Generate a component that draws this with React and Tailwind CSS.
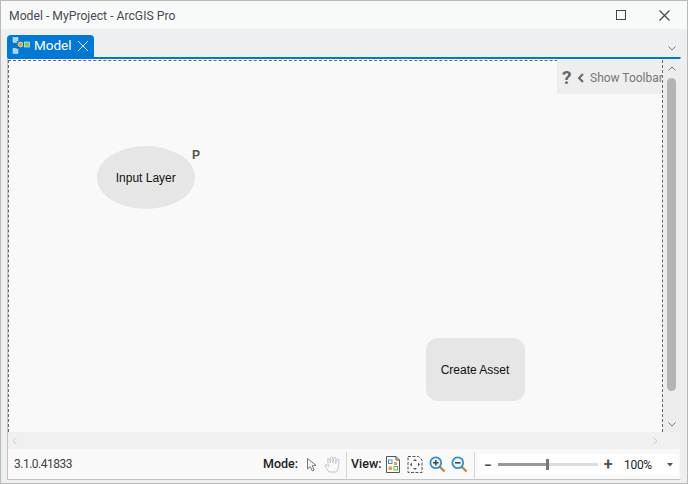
import React from "react";

const font = { fontFamily: 'Roboto,"Open Sans",sans-serif' };

function ModelIcon() {
  return (
    <svg width="18" height="18" viewBox="0 0 18 18" className="shrink-0">
      <rect x="1" y="0.5" width="5" height="5" fill="#a9d3f5" stroke="#d6ebfb" strokeWidth="0.5" />
      <rect x="1" y="11.5" width="5" height="5" fill="#a9d3f5" stroke="#d6ebfb" strokeWidth="0.5" />
      <path d="M5 4 L7 7 M5 12 L7 9" stroke="#12406e" strokeWidth="1" />
      <circle cx="8.5" cy="7.5" r="2.4" fill="#e8a33d" stroke="#fbe3b5" strokeWidth="0.7" />
      <path d="M11 7.5h1.5" stroke="#12406e" strokeWidth="1" />
      <rect x="12.5" y="5" width="5" height="5" fill="#7cc576" stroke="#d7f0d3" strokeWidth="0.7" />
    </svg>
  );
}

function Chevron({ d, color = "#7a7a7a", w = 1 }) {
  return (
    <svg width="10" height="10" viewBox="0 0 10 10" fill="none" stroke={color} strokeWidth={w}>
      <path d={d} />
    </svg>
  );
}

function ModeIcons() {
  return (
    <>
      <svg width="12" height="16" viewBox="0 0 12 16" fill="none" stroke="#777" strokeWidth="1">
        <path d="M1.5 1.5 L1.5 12 L4.2 9.6 L6.4 14 L8.2 13 L6.2 8.8 L10 8.4 Z" fill="#f4f4f4" />
      </svg>
      <svg width="18" height="17" viewBox="0 0 18 17" fill="none" stroke="#c8c8c8" strokeWidth="1">
        <path d="M5 16 L1 10 Q0.5 8.5 2 8.5 L4.5 10.5 L3.5 3 Q3.8 2 5 3 L6.5 7 L6.5 1.5 Q7.5 0.5 8.5 1.5 L9 7 L10 1.5 Q11 1 12 2 L11.5 7.5 L13.5 3 Q14.5 2.5 15 3.5 L14.5 10 Q14 14 12.5 16 Z" />
      </svg>
    </>
  );
}

function ViewIcons() {
  return (
    <>
      <svg width="16" height="17" viewBox="0 0 16 17" fill="none">
        <path d="M1.5 0.5 H11 L14.5 4 V16.5 H1.5 Z" stroke="#555" fill="#fff" />
        <path d="M11 0.5 V4 H14.5" stroke="#555" />
        <rect x="3.5" y="4" width="3.5" height="3.5" stroke="#3d93d8" />
        <rect x="3.5" y="10.5" width="3.5" height="3.5" fill="#e8a33d" />
        <rect x="9" y="10.5" width="3.5" height="3.5" stroke="#5fb35a" />
        <rect x="9" y="6" width="3" height="3" fill="#e8a33d" />
      </svg>
      <svg width="16" height="17" viewBox="0 0 16 17" fill="none">
        <path d="M1 0.5 H11.5 L15 4 V16.5 H1 Z" stroke="#555" fill="#fafafa" strokeDasharray="3 1.5" />
        <path d="M8 3 l-2 2 h4 Z M8 14 l-2 -2 h4 Z M3 8.5 l2 -2 v4 Z M13 8.5 l-2 -2 v4 Z" fill="#555" />
      </svg>
      <svg width="17" height="17" viewBox="0 0 17 17" fill="none">
        <path d="M10.5 10.5 L15.5 15.5" stroke="#c08a3e" strokeWidth="2.4" />
        <circle cx="6.8" cy="6.8" r="5.4" stroke="#2f8fd0" strokeWidth="1.8" fill="#f2f8fd" />
        <path d="M4 6.8 H9.6 M6.8 4 V9.6" stroke="#444" strokeWidth="1.6" />
      </svg>
      <svg width="17" height="17" viewBox="0 0 17 17" fill="none" className="-ml-px">
        <path d="M10.5 10.5 L15.5 15.5" stroke="#c08a3e" strokeWidth="2.4" />
        <circle cx="6.8" cy="6.8" r="5.4" stroke="#2f8fd0" strokeWidth="1.8" fill="#f2f8fd" />
        <path d="M4 6.8 H9.6" stroke="#444" strokeWidth="1.6" />
      </svg>
    </>
  );
}

export default function App() {
  return (
    <div style={font} className="w-[688px] h-[484px] flex flex-col bg-[#eeeff1] border border-[#b9b9b9] overflow-hidden text-[#3c3c3c]">
      {/* Title bar */}
      <div className="h-[28px] shrink-0 bg-[#f8f9f9] flex items-center pl-[8px]">
        <span className="text-[12.2px] text-[#4a4a55] leading-none mt-[2px]">Model - MyProject - ArcGIS Pro</span>
        <div className="ml-auto flex items-center">
          <div className="w-[10px] h-[10px] border-[1.5px] border-[#444] mr-[33px]" />
          <svg width="11" height="11" viewBox="0 0 11 11" stroke="#444" strokeWidth="1.2" className="mr-[17px]">
            <path d="M0.5 0.5 L10.5 10.5 M10.5 0.5 L0.5 10.5" />
          </svg>
        </div>
      </div>

      {/* Tab strip */}
      <div className="h-[28px] shrink-0 flex items-end pl-[6px] pr-[10px] justify-between">
        <div className="w-[87px] h-[22px] bg-[#0078d4] rounded-t-[4px] flex items-center pl-[5px] text-white">
          <ModelIcon />
          <span className="text-[13.5px] ml-[4px] leading-none w-[35px]">Model</span>
          <svg width="12" height="12" viewBox="0 0 12 12" stroke="#dcebf8" strokeWidth="1" className="ml-[8px] shrink-0">
            <path d="M1 1 L11 11 M11 1 L1 11" />
          </svg>
        </div>
        <div className="mb-[4px]"><Chevron d="M1.5 3.5 L5 7 L8.5 3.5" /></div>
      </div>

      {/* Document pane */}
      <div className="flex-1 min-h-0 flex flex-col ml-[6px] mr-[6px] mb-[3px] border-t-2 border-t-[#0078d4] border-l border-r border-b border-l-[#c4c4c4] border-r-[#eeeff1] border-b-[#c4c4c4] bg-[#f9f9f9]">
        <div className="flex-1 min-h-0 flex">
          {/* Canvas */}
          <div className="relative flex-1 border-t border-l border-r border-dashed border-[#666] mt-px">
            <div className="absolute left-[87.5px] top-[85px] w-[98.5px] h-[63px] rounded-[50%] bg-[#e6e6e6] flex items-center justify-center text-[12px] text-[#111]" style={{ fontFamily: '"Liberation Sans",sans-serif' }}>
              Input Layer
            </div>
            <span className="absolute left-[183px] top-[88px] text-[12px] font-bold text-[#555] leading-none" style={{ fontFamily: '"Liberation Sans",sans-serif' }}>P</span>
            <div className="absolute left-[416.5px] top-[277px] w-[99px] h-[63px] rounded-[12px] bg-[#e6e6e6] flex items-center justify-center text-[12px] text-[#111]" style={{ fontFamily: '"Liberation Sans",sans-serif' }}>
              Create Asset
            </div>
            <div className="absolute right-[0px] top-[-1px] w-[105px] h-[34px] bg-[#eeeeee] flex items-center pl-[5px] text-[#777]">
              <span className="text-[19px] font-bold leading-none text-[#666] w-[9px] mt-[1px] shrink-0">?</span>
              <svg width="8" height="10" viewBox="0 0 8 10" fill="none" stroke="#666" strokeWidth="2" className="ml-[6px] mt-[2px] shrink-0">
                <path d="M6 1 L2 5 L6 9" />
              </svg>
              <span className="text-[12px] ml-[5px] whitespace-nowrap leading-none mt-[2px] shrink-0">Show Toolbar</span>
            </div>
          </div>
          {/* Vertical scrollbar */}
          <div className="w-[17px] bg-[#ededed] flex flex-col items-center">
            <div className="h-[19px] flex items-center justify-center"><Chevron d="M1.5 6.5 L5 3 L8.5 6.5" /></div>
            <div className="w-[9px] h-[313px] rounded-[5px] bg-[#b4b4b4]" />
            <div className="mt-auto h-[17px] flex items-center justify-center"><Chevron d="M1.5 3.5 L5 7 L8.5 3.5" /></div>
          </div>
        </div>
        {/* Horizontal scrollbar */}
        <div className="h-[17px] shrink-0 bg-[#f0f0f0] flex items-center justify-between pl-[2px] pr-[20px]">
          <Chevron d="M6.5 1.5 L3 5 L6.5 8.5" color="#d0d0d0" />
          <Chevron d="M3.5 1.5 L7 5 L3.5 8.5" color="#d0d0d0" />
        </div>
        {/* Status bar */}
        <div className="h-[30px] shrink-0 bg-[#f9f9f9] flex items-center pl-[6px] text-[12px]">
          <span className="text-[#444] text-[12px] tracking-[-0.5px] leading-none mb-px">3.1.0.41833</span>
          <div className="ml-auto flex items-center h-[26px] mt-px">
            <span className="font-medium text-[#222] text-[12.5px] w-[35px] mr-[8px] leading-none whitespace-nowrap">Mode:</span>
            <div className="flex items-center gap-[6px] pr-[4px] mr-[4px] border-r border-[#d4d4d4] h-full">
              <ModeIcons />
            </div>
            <span className="font-medium text-[#222] text-[12.5px] w-[30px] mr-[4px] leading-none whitespace-nowrap">View:</span>
            <div className="flex items-center gap-[6px] pr-[6px] mr-[3px] border-r border-[#d4d4d4] h-full">
              <ViewIcons />
            </div>
            <div className="flex items-center bg-white h-[21px] w-[200px] mr-[2px]">
              <span className="w-[20px] text-center font-bold text-[#555] text-[14px] leading-none">−</span>
              <div className="relative w-[100px] h-[3px] bg-[#dcdcdc]">
                <div className="h-full w-[50px] bg-[#999]" />
                <div className="absolute left-[48px] top-[-4px] w-[3px] h-[11px] bg-[#777]" />
              </div>
              <span className="w-[20px] text-center font-bold text-[#555] text-[16px] leading-none">+</span>
              <span className="ml-[6px] text-[12px] tracking-[-0.3px] text-[#222] leading-none">100%</span>
              <svg width="6" height="4" viewBox="0 0 6 4" className="ml-auto mr-[5px]"><path d="M0 0 H6 L3 3.5 Z" fill="#555" /></svg>
            </div>
          </div>
        </div>
      </div>
    </div>
  );
}
